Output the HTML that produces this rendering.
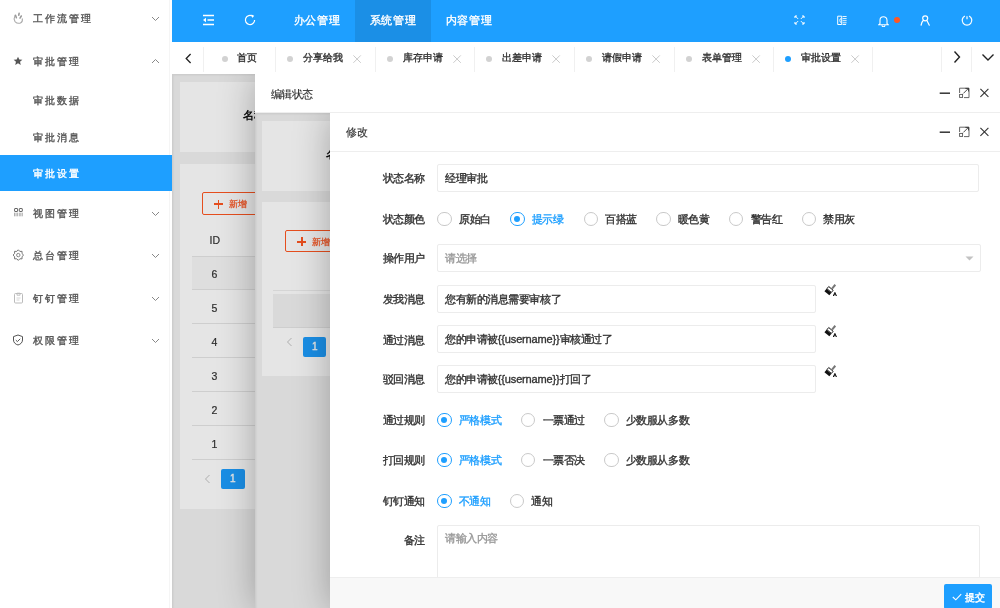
<!DOCTYPE html>
<html><head><meta charset="utf-8">
<style>
*{box-sizing:border-box;margin:0;padding:0}
html,body{width:1000px;height:608px;overflow:hidden;background:#fff}
body{will-change:transform;-webkit-font-smoothing:antialiased;-webkit-text-stroke-width:0.35px;position:relative;font-family:"Liberation Sans",sans-serif;font-size:11px;color:#333}
.abs{position:absolute}
/* sidebar */
#side{position:absolute;left:0;top:0;width:172px;height:608px;background:#fff}
#side:after{content:"";position:absolute;left:168.5px;top:0;width:1px;height:608px;background:#f5f5f5}
.mi{position:absolute;left:0;width:172px;z-index:1;color:#555;font-size:10px;letter-spacing:1.9px;line-height:14px}
.mi .t{position:absolute;left:33px;top:0;white-space:nowrap}
.mi svg{position:absolute}
.sel{background:#1E9FFF;color:#fff}
/* header */
#hdr{position:absolute;left:172px;top:0;width:828px;height:42px;background:#1E9FFF}
.nav{position:absolute;top:0;height:42px;width:76px;color:#fff;font-size:11px;letter-spacing:0.7px;font-weight:normal;-webkit-text-stroke-width:0.35px;text-align:center;line-height:41px}
.nav.on{background:#1b8fe6}
#hdr svg{position:absolute}
/* tabs */
#tabs{position:absolute;left:172px;top:42px;width:828px;height:32px;background:#fff}
.tab{position:absolute;top:0;height:31px;color:#333;font-size:10px;line-height:31px}
.tl:after{display:none}
.tab:after{content:"";position:absolute;right:0;top:5px;width:1px;height:25px;background:#f0f0f0}
.tab .d{position:absolute;left:11px;top:13.5px;width:6px;height:6px;border-radius:50%;background:#d2d2d2}
.tab .tx{position:absolute;left:27px;top:0;white-space:nowrap}
.tab .x{position:absolute}

.card{position:absolute;background:#fff}
.ov{position:absolute;left:0;top:0;right:0;bottom:0;background:rgba(0,0,0,0.1)}
.btnadd{position:absolute;height:22.5px;width:62px;border:1px solid #FF5722;border-radius:2px;color:#FF5722;font-size:9px;line-height:22px;background:#fff;-webkit-text-stroke-width:0.25px}
.btnadd .pl{position:absolute;left:11px;top:6.5px;width:9px;height:9px}
.btnadd .pl:before{content:"";position:absolute;left:0;top:3.7px;width:9px;height:1.7px;background:#FF5722}
.btnadd .pl:after{content:"";position:absolute;left:3.65px;top:0;width:1.7px;height:9px;background:#FF5722}
.btnadd .bt{position:absolute;left:26px;top:0}
.trow{position:absolute;height:34px;border-bottom:1px solid #e6e6e6;font-size:10.5px;line-height:36.5px;color:#333;-webkit-text-stroke-width:0.2px}
.pg1{position:absolute;width:23.5px;height:20px;background:#1E9FFF;color:#fff;border-radius:2px;font-size:10px;text-align:center;line-height:20px}
.pgl{position:absolute;width:6px;height:9px}
.panel{position:absolute;background:#fff;box-shadow:1px 1px 35px rgba(0,0,0,.3)}
.ph{position:absolute;left:0;top:0;right:0;height:39px;border-bottom:1px solid #eee;background:#fff;font-size:11px;letter-spacing:-0.45px;color:#333}
.ph .tt{position:absolute;top:12.5px;line-height:14px;-webkit-text-stroke-width:0.15px}
.lbl{position:absolute;width:95px;text-align:right;font-size:11px;letter-spacing:-0.45px;line-height:14px;color:#333;white-space:nowrap}
.inp{position:absolute;height:28px;border:1px solid #ececec;border-radius:2px;background:#fff;font-size:11px;letter-spacing:-0.45px;line-height:26px;padding-left:7px;color:#333;white-space:nowrap}
.rd{position:absolute;width:14.5px;height:14.5px;border:1.2px solid #c9c9c9;border-radius:50%;background:#fff}
.rd.on{border-color:#1E9FFF}
.rd.on:after{content:"";position:absolute;left:3.05px;top:3.05px;width:6px;height:6px;border-radius:50%;background:#1E9FFF}
.rt{position:absolute;font-size:11px;letter-spacing:-0.45px;line-height:14px;color:#333;white-space:nowrap}
.rt.on{color:#1E9FFF}
</style></head><body>

<div id="side">
<div class="mi" style="top:12px;height:14px"><span class="t">工作流管理</span></div>
<svg class="abs" style="left:10px;top:10px" width="16" height="16" viewBox="0 0 16 16"><path d="M5 5.6Q3.4 8.8 5 11.6Q7.4 14 10.4 13Q12.9 11.8 12.3 8.8" fill="none" stroke="#aaa" stroke-width="1.1" stroke-linecap="round"/><path d="M5.5 5.2L6.4 7.8" stroke="#999" stroke-width="1.5" stroke-linecap="round"/><path d="M9.1 3.4L8.8 5.2" stroke="#999" stroke-width="1.6" stroke-linecap="round"/><path d="M11.3 6L10 8.2" stroke="#999" stroke-width="1.5" stroke-linecap="round"/></svg>
<svg class="abs" style="left:151px;top:15.5px" width="9" height="6" viewBox="0 0 9 6"><path d="M1 1L4.5 4.5 8 1" fill="none" stroke="#888" stroke-width="1"/></svg>

<div class="mi" style="top:54.5px;height:14px"><span class="t">审批管理</span></div>
<svg class="abs" style="left:13px;top:56px" width="10" height="10" viewBox="0 0 24 24"><path d="M12 1.5l3.1 7 7.4.6-5.6 4.9 1.7 7.4L12 17.5l-6.6 3.9 1.7-7.4L1.5 9.1l7.4-.6z" fill="#555"/></svg>
<svg class="abs" style="left:151px;top:58px" width="9" height="6" viewBox="0 0 9 6"><path d="M1 5L4.5 1.5 8 5" fill="none" stroke="#888" stroke-width="1"/></svg>

<div class="mi" style="top:94.2px;height:14px"><span class="t">审批数据</span></div>
<div class="mi" style="top:130.7px;height:14px"><span class="t">审批消息</span></div>
<div class="mi sel" style="top:155px;height:35.5px;"><span class="t" style="top:12.2px">审批设置</span></div>

<div class="mi" style="top:206.5px;height:14px"><span class="t">视图管理</span></div>
<svg class="abs" style="left:10px;top:204px" width="16" height="16" viewBox="0 0 16 16"><rect x="4.6" y="4.5" width="3" height="3" rx="0.4" fill="none" stroke="#666" stroke-width="1"/><rect x="9.3" y="4.5" width="3" height="3" rx="0.4" fill="none" stroke="#666" stroke-width="1"/><path d="M4.5 8.7v3.6M6 8.7v3.6M7.4 8.7v3.6M9.3 8.7v3.6M10.8 8.7v3.6M12.3 8.7v3.6" stroke="#999" stroke-width="0.8"/></svg>
<svg class="abs" style="left:151px;top:210.5px" width="9" height="6" viewBox="0 0 9 6"><path d="M1 1L4.5 4.5 8 1" fill="none" stroke="#888" stroke-width="1"/></svg>

<div class="mi" style="top:249px;height:14px"><span class="t">总台管理</span></div>
<svg class="abs" style="left:10px;top:247px" width="16" height="16" viewBox="0 0 16 16"><path d="M8.30 2.80 L9.83 4.40 L12.05 4.35 L12.00 6.57 L13.60 8.10 L12.00 9.63 L12.05 11.85 L9.83 11.80 L8.30 13.40 L6.77 11.80 L4.55 11.85 L4.60 9.63 L3.00 8.10 L4.60 6.57 L4.55 4.35 L6.77 4.40Z" fill="none" stroke="#777" stroke-width="1" stroke-linejoin="round"/><circle cx="8.3" cy="8.1" r="1.7" fill="none" stroke="#888" stroke-width="1"/></svg>
<svg class="abs" style="left:151px;top:253px" width="9" height="6" viewBox="0 0 9 6"><path d="M1 1L4.5 4.5 8 1" fill="none" stroke="#888" stroke-width="1"/></svg>

<div class="mi" style="top:291.5px;height:14px"><span class="t">钉钉管理</span></div>
<svg class="abs" style="left:13px;top:292px" width="11" height="12" viewBox="0 0 11 12"><rect x="1.5" y="1.5" width="8" height="9.5" rx="1" fill="none" stroke="#bbb" stroke-width="1"/><path d="M4 1.2h3v2h-3z" fill="none" stroke="#bbb" stroke-width="0.9"/><path d="M3.5 6h4M3.5 8h3" stroke="#ccc" stroke-width="0.8"/></svg>
<svg class="abs" style="left:151px;top:295.5px" width="9" height="6" viewBox="0 0 9 6"><path d="M1 1L4.5 4.5 8 1" fill="none" stroke="#888" stroke-width="1"/></svg>

<div class="mi" style="top:334px;height:14px"><span class="t">权限管理</span></div>
<svg class="abs" style="left:12px;top:334px" width="12" height="12" viewBox="0 0 12 12"><path d="M6 1L10.5 2.6V6c0 2.6-2 4.3-4.5 5C3.5 10.3 1.5 8.6 1.5 6V2.6z" fill="none" stroke="#555" stroke-width="1"/><path d="M3.8 6.1l1.6 1.5 2.8-2.8" fill="none" stroke="#555" stroke-width="1"/></svg>
<svg class="abs" style="left:151px;top:338px" width="9" height="6" viewBox="0 0 9 6"><path d="M1 1L4.5 4.5 8 1" fill="none" stroke="#888" stroke-width="1"/></svg>
</div>

<div id="hdr">
<svg style="left:30px;top:14px" width="13" height="12" viewBox="0 0 13 12"><path d="M1 1.5h11M5.5 6h6.5M1 10.5h11" stroke="#fff" stroke-width="1.6"/><path d="M1 6l3-2.2v4.4z" fill="#fff"/></svg>
<svg style="left:72px;top:14px" width="12" height="12" viewBox="0 0 12 12"><path d="M8.6 2.2A4.6 4.6 0 1 0 10.6 6" fill="none" stroke="#fff" stroke-width="1.2"/><path d="M7.4 0.6l2.8 1.2-1.8 2.2z" fill="#fff"/></svg>
<div class="nav" style="left:107px">办公管理</div>
<div class="nav on" style="left:183px">系统管理</div>
<div class="nav" style="left:259px">内容管理</div>
<svg style="left:622px;top:15px" width="11" height="10" viewBox="0 0 11 10"><path d="M1.2 1l3 3M9.8 1L6.8 4M1.2 9l3-3M9.8 9l-3-3" stroke="#fff" stroke-width="0.9"/><path d="M1 1h2M1 1v2M10 1h-2M10 1v2M1 9h2M1 9v-2M10 9h-2M10 9v-2" stroke="#fff" stroke-width="1.1"/></svg>
<svg style="left:663px;top:12px" width="16" height="16" viewBox="0 0 16 16"><path d="M2.7 4.2h4v8.3h-4z" fill="none" stroke="#fff" stroke-width="1"/><path d="M6.1 6.3A1.6 2.2 0 0 0 6.1 10.6" fill="none" stroke="#fff" stroke-width="1"/><path d="M7.6 4.5h4M7.6 6.6h4M7.6 8.7h4M7.6 10.8h4M7.6 12.5h3.5" stroke="#fff" stroke-width="0.9"/></svg>
<svg style="left:706px;top:14.5px" width="11" height="12" viewBox="0 0 11 12"><path d="M2 8.6V5.2a3.5 3.5 0 0 1 7 0v3.4l1.2 1.2H0.8z" fill="none" stroke="#fff" stroke-width="1.1"/><path d="M4 10.2a1.5 1.5 0 0 0 3 0" fill="none" stroke="#fff" stroke-width="1.1"/></svg>
<div class="abs" style="left:721.8px;top:17.2px;width:6px;height:6px;border-radius:50%;background:#FF5722"></div>
<svg style="left:748px;top:15px" width="11" height="11" viewBox="0 0 11 11"><circle cx="5.2" cy="3.3" r="2.5" fill="none" stroke="#fff" stroke-width="1.2"/><path d="M3.4 5.2Q1.6 6.8 1.1 10.2M6.9 5.4L9.3 10.2" fill="none" stroke="#fff" stroke-width="1.2" stroke-linecap="round"/></svg>
<svg style="left:789px;top:13.9px" width="12" height="12" viewBox="0 0 12 12"><path d="M8.10 1.99A4.8 4.8 0 1 1 3.90 1.99" fill="none" stroke="#fff" stroke-width="1.2"/><path d="M6 2.2v3" stroke="#fff" stroke-width="1.2"/></svg>
</div>

<div id="tabs">
<div class="tab" style="left:0;width:32px"><svg class="abs" style="left:12.5px;top:10.5px" width="7" height="11" viewBox="0 0 7 11"><path d="M5.6 1L1.2 5.5l4.4 4.5" fill="none" stroke="#222" stroke-width="1.3"/></svg></div>
<div class="tab" style="left:32px;width:72px"><span class="d" style="left:17.6px"></span><span class="tx" style="left:33px">首页</span></div>
<div class="tab" style="left:104px;width:100px"><span class="d"></span><span class="tx">分享给我</span><svg class="x" style="left:76.5px;top:13px" width="9" height="9" viewBox="0 0 9 9"><path d="M0.4 0.4l7.4 7.4M7.8 0.4L0.4 7.8" stroke="#c4c4c4" stroke-width="0.9"/></svg></div>
<div class="tab" style="left:204px;width:99px"><span class="d"></span><span class="tx">库存申请</span><svg class="x" style="left:76.5px;top:13px" width="9" height="9" viewBox="0 0 9 9"><path d="M0.4 0.4l7.4 7.4M7.8 0.4L0.4 7.8" stroke="#c4c4c4" stroke-width="0.9"/></svg></div>
<div class="tab" style="left:303px;width:100px"><span class="d"></span><span class="tx">出差申请</span><svg class="x" style="left:76.5px;top:13px" width="9" height="9" viewBox="0 0 9 9"><path d="M0.4 0.4l7.4 7.4M7.8 0.4L0.4 7.8" stroke="#c4c4c4" stroke-width="0.9"/></svg></div>
<div class="tab" style="left:403px;width:100px"><span class="d"></span><span class="tx">请假申请</span><svg class="x" style="left:76.5px;top:13px" width="9" height="9" viewBox="0 0 9 9"><path d="M0.4 0.4l7.4 7.4M7.8 0.4L0.4 7.8" stroke="#c4c4c4" stroke-width="0.9"/></svg></div>
<div class="tab" style="left:503px;width:99px"><span class="d"></span><span class="tx">表单管理</span><svg class="x" style="left:76.5px;top:13px" width="9" height="9" viewBox="0 0 9 9"><path d="M0.4 0.4l7.4 7.4M7.8 0.4L0.4 7.8" stroke="#c4c4c4" stroke-width="0.9"/></svg></div>
<div class="tab" style="left:602px;width:99px"><span class="d" style="background:#1E9FFF"></span><span class="tx">审批设置</span><svg class="x" style="left:76.5px;top:13px" width="9" height="9" viewBox="0 0 9 9"><path d="M0.4 0.4l7.4 7.4M7.8 0.4L0.4 7.8" stroke="#c4c4c4" stroke-width="0.9"/></svg></div>
<div class="tab" style="left:740px;width:30px;border-right:0"></div><div class="tab" style="left:770px;width:30px"><svg class="abs" style="left:11px;top:8px" width="8" height="14" viewBox="0 0 8 14"><path d="M1.5 1.5L6.5 7l-5 5.5" fill="none" stroke="#222" stroke-width="1.4"/></svg></div>
<div class="tab tl" style="left:800px;width:28px;"><svg class="abs" style="left:9px;top:11px" width="14" height="9" viewBox="0 0 14 9"><path d="M1.5 1.5L7 7l5.5-5.5" fill="none" stroke="#222" stroke-width="1.4"/></svg></div>
</div>

<div id="content" class="abs" style="left:172px;top:74px;width:828px;height:534px;overflow:hidden;background:#f2f2f2">
<!-- layer 0 -->
<div class="card" style="left:7.5px;top:7.5px;width:813px;height:70.5px">
  <span class="abs" style="left:63.5px;top:26.5px;font-size:11px;line-height:14px;color:#000">名称</span>
</div>
<div class="card" style="left:7.5px;top:90px;width:813px;height:345px">
  <div class="btnadd" style="left:22.5px;top:28px"><span class="pl"></span><span class="bt">新增</span></div>
  <div class="trow" style="left:12.5px;top:58px;width:790px;border-bottom:0"><span class="abs" style="left:17.5px;top:0">ID</span></div>
  <div class="trow" style="left:12.5px;top:92px;width:790px;background:#f8f8f8;border-top:1px solid #e6e6e6"><span class="abs" style="left:19.5px;top:-1px">6</span></div>
  <div class="trow" style="left:12.5px;top:126px;width:790px"><span class="abs" style="left:19.5px">5</span></div>
  <div class="trow" style="left:12.5px;top:160px;width:790px"><span class="abs" style="left:19.5px">4</span></div>
  <div class="trow" style="left:12.5px;top:194px;width:790px"><span class="abs" style="left:19.5px">3</span></div>
  <div class="trow" style="left:12.5px;top:228px;width:790px"><span class="abs" style="left:19.5px">2</span></div>
  <div class="trow" style="left:12.5px;top:262px;width:790px"><span class="abs" style="left:19.5px">1</span></div>
  <svg class="abs" style="left:24px;top:310px" width="7" height="10" viewBox="0 0 7 10"><path d="M5.5 1L1.5 5l4 4" fill="none" stroke="#c2c2c2" stroke-width="1"/></svg>
  <div class="pg1" style="left:41.5px;top:304.5px">1</div>
</div>
<div class="ov"></div>
<div class="abs" style="left:0;top:0;width:828px;height:534px;box-shadow:inset 1.5px 1.5px 1.5px rgba(0,0,0,0.06)"></div>

<!-- panel 1 -->
<div class="panel" style="left:83px;top:0;width:745px;height:534px">
  <div class="ph"><span class="tt" style="left:15.6px">编辑状态</span>
    <svg class="abs" style="left:682.2px;top:13px" width="52" height="12" viewBox="0 0 52 12"><path d="M2.7 6.2h10.3" stroke="#333" stroke-width="1.5"/><path d="M22.6 6V1.2h9.4v9.4H27" fill="none" stroke="#555" stroke-width="0.9"/><rect x="22.6" y="7.4" width="3" height="3" fill="none" stroke="#555" stroke-width="0.9"/><path d="M26.4 6.4l5-5M28.4 1.4h3.1v3.1" fill="none" stroke="#333" stroke-width="0.9"/><path d="M43.4 1.8l8 8M51.4 1.8l-8 8" stroke="#333" stroke-width="1.1"/></svg>
  </div>
  <div class="abs" style="left:0;top:39px;width:745px;height:495px;background:#f2f2f2;overflow:hidden">
    <div class="card" style="left:7.3px;top:7.5px;width:730px;height:70px">
      <span class="abs" style="left:63.7px;top:26.5px;font-size:11px;line-height:14px;color:#000">名称</span>
    </div>
    <div class="card" style="left:7.3px;top:89.4px;width:730px;height:173.4px">
      <div class="btnadd" style="left:23px;top:27.6px"><span class="pl"></span><span class="bt">新增</span></div>
      <div class="abs" style="left:10.7px;top:87.6px;width:708px;height:1px;background:#eee"></div>
      <div class="abs" style="left:10.7px;top:91.6px;width:708px;height:34.5px;background:#f2f2f2;border-bottom:1px solid #e6e6e6"></div>
      <svg class="abs" style="left:23.7px;top:134.3px" width="7" height="10" viewBox="0 0 7 10"><path d="M5.5 1L1.5 5l4 4" fill="none" stroke="#c2c2c2" stroke-width="1"/></svg>
      <div class="pg1" style="left:40.7px;top:134.3px">1</div>
    </div>
    <div class="ov"></div>
    <div class="abs" style="left:0;top:0;width:745px;height:495px;box-shadow:inset 1.5px 1.5px 1.5px rgba(0,0,0,0.06)"></div>

    <!-- panel 2 -->
    <div class="panel" style="left:75px;top:0;width:670px;height:495px">
      <div class="ph"><span class="tt" style="left:16px;top:12.2px">修改</span>
        <svg class="abs" style="left:607.2px;top:13px" width="52" height="12" viewBox="0 0 52 12"><path d="M2.7 6.2h10.3" stroke="#333" stroke-width="1.5"/><path d="M22.6 6V1.2h9.4v9.4H27" fill="none" stroke="#555" stroke-width="0.9"/><rect x="22.6" y="7.4" width="3" height="3" fill="none" stroke="#555" stroke-width="0.9"/><path d="M26.4 6.4l5-5M28.4 1.4h3.1v3.1" fill="none" stroke="#333" stroke-width="0.9"/><path d="M43.4 1.8l8 8M51.4 1.8l-8 8" stroke="#333" stroke-width="1.1"/></svg>
      </div>
      <span class="lbl" style="left:0;top:57.8px">状态名称</span>
<div class="inp" style="left:107px;top:50.5px;width:542.2px;">经理审批</div>
<span class="lbl" style="left:0;top:99.0px">状态颜色</span>
<span class="rd" style="left:107.45px;top:98.75px"></span><span class="rt" style="left:129.0px;top:99.0px">原始白</span>
<span class="rd on" style="left:180.25px;top:98.75px"></span><span class="rt on" style="left:201.8px;top:99.0px">提示绿</span>
<span class="rd" style="left:253.55px;top:98.75px"></span><span class="rt" style="left:275.1px;top:99.0px">百搭蓝</span>
<span class="rd" style="left:326.25px;top:98.75px"></span><span class="rt" style="left:347.8px;top:99.0px">暖色黄</span>
<span class="rd" style="left:398.95px;top:98.75px"></span><span class="rt" style="left:420.5px;top:99.0px">警告红</span>
<span class="rd" style="left:471.75px;top:98.75px"></span><span class="rt" style="left:493.3px;top:99.0px">禁用灰</span>
<span class="lbl" style="left:0;top:138.4px">操作用户</span>
<div class="inp" style="left:107px;top:131px;width:544px;color:#999;">请选择</div>
<svg class="abs" style="left:634.5px;top:142.5px" width="9" height="5" viewBox="0 0 9 5"><path d="M0.5 0.5h8L4.5 4.5z" fill="#c2c2c2"/></svg>
<span class="lbl" style="left:0;top:179.2px">发我消息</span>
<div class="inp" style="left:107px;top:171.5px;width:378.5px;">您有新的消息需要审核了</div>
<svg class="abs" style="left:488px;top:167.0px" width="24" height="20" viewBox="0 0 24 20"><g transform="translate(11 10.7) rotate(40)"><rect x="-3.2" y="0" width="6.4" height="3.3" fill="#111"/><rect x="-2.9" y="-3" width="5.8" height="2.8" fill="#fff" stroke="#111" stroke-width="0.9"/><rect x="0" y="-8.6" width="2" height="5" fill="#777"/></g><path d="M15.3 16l1.6-3.6 1.6 3.6M15.9 14.8h2" fill="none" stroke="#111" stroke-width="1"/></svg>
<span class="lbl" style="left:0;top:219.5px">通过消息</span>
<div class="inp" style="left:107px;top:211.7px;width:378.5px;">您的申请被<span style="letter-spacing:-0.15px">{{username}}</span>审核通过了</div>
<svg class="abs" style="left:488px;top:207.5px" width="24" height="20" viewBox="0 0 24 20"><g transform="translate(11 10.7) rotate(40)"><rect x="-3.2" y="0" width="6.4" height="3.3" fill="#111"/><rect x="-2.9" y="-3" width="5.8" height="2.8" fill="#fff" stroke="#111" stroke-width="0.9"/><rect x="0" y="-8.6" width="2" height="5" fill="#777"/></g><path d="M15.3 16l1.6-3.6 1.6 3.6M15.9 14.8h2" fill="none" stroke="#111" stroke-width="1"/></svg>
<span class="lbl" style="left:0;top:259.0px">驳回消息</span>
<div class="inp" style="left:107px;top:252px;width:378.5px;">您的申请被<span style="letter-spacing:-0.15px">{{username}}</span>打回了</div>
<svg class="abs" style="left:488px;top:248.0px" width="24" height="20" viewBox="0 0 24 20"><g transform="translate(11 10.7) rotate(40)"><rect x="-3.2" y="0" width="6.4" height="3.3" fill="#111"/><rect x="-2.9" y="-3" width="5.8" height="2.8" fill="#fff" stroke="#111" stroke-width="0.9"/><rect x="0" y="-8.6" width="2" height="5" fill="#777"/></g><path d="M15.3 16l1.6-3.6 1.6 3.6M15.9 14.8h2" fill="none" stroke="#111" stroke-width="1"/></svg>
<span class="lbl" style="left:0;top:300.0px">通过规则</span>
<span class="rd on" style="left:107.35px;top:299.75px"></span><span class="rt on" style="left:128.9px;top:300.0px">严格模式</span>
<span class="rd" style="left:190.95px;top:299.75px"></span><span class="rt" style="left:212.5px;top:300.0px">一票通过</span>
<span class="rd" style="left:274.25px;top:299.75px"></span><span class="rt" style="left:295.8px;top:300.0px">少数服从多数</span>
<span class="lbl" style="left:0;top:340.2px">打回规则</span>
<span class="rd on" style="left:107.35px;top:339.95px"></span><span class="rt on" style="left:128.9px;top:340.2px">严格模式</span>
<span class="rd" style="left:190.95px;top:339.95px"></span><span class="rt" style="left:212.5px;top:340.2px">一票否决</span>
<span class="rd" style="left:274.25px;top:339.95px"></span><span class="rt" style="left:295.8px;top:340.2px">少数服从多数</span>
<span class="lbl" style="left:0;top:380.8px">钉钉通知</span>
<span class="rd on" style="left:107.35px;top:380.55px"></span><span class="rt on" style="left:128.9px;top:380.8px">不通知</span>
<span class="rd" style="left:179.75px;top:380.55px"></span><span class="rt" style="left:201.3px;top:380.8px">通知</span>
<span class="lbl" style="left:0;top:420.0px">备注</span>
<div class="inp" style="left:107px;top:412.4px;width:542.6px;height:80px;color:#999;line-height:14px;padding-top:5px">请输入内容</div>
      <div class="abs" style="left:0;top:464px;width:670px;height:31px;background:#f8f8f8;border-top:1px solid #eee">
        <div class="abs" style="left:614px;top:6.2px;width:47.5px;height:25px;background:#1E9FFF;border-radius:2px;color:#fff;font-size:10px;line-height:24px">
          <svg class="abs" style="left:8px;top:9px" width="10" height="8" viewBox="0 0 10 8"><path d="M0.8 4l3 2.8 5.4-5.6" fill="none" stroke="#fff" stroke-width="1.1"/></svg>
          <span class="abs" style="left:21px;top:1.5px;-webkit-text-stroke-width:0.4px">提交</span>
        </div>
      </div>
    </div>
  </div>
</div>
</div>

</body></html>
